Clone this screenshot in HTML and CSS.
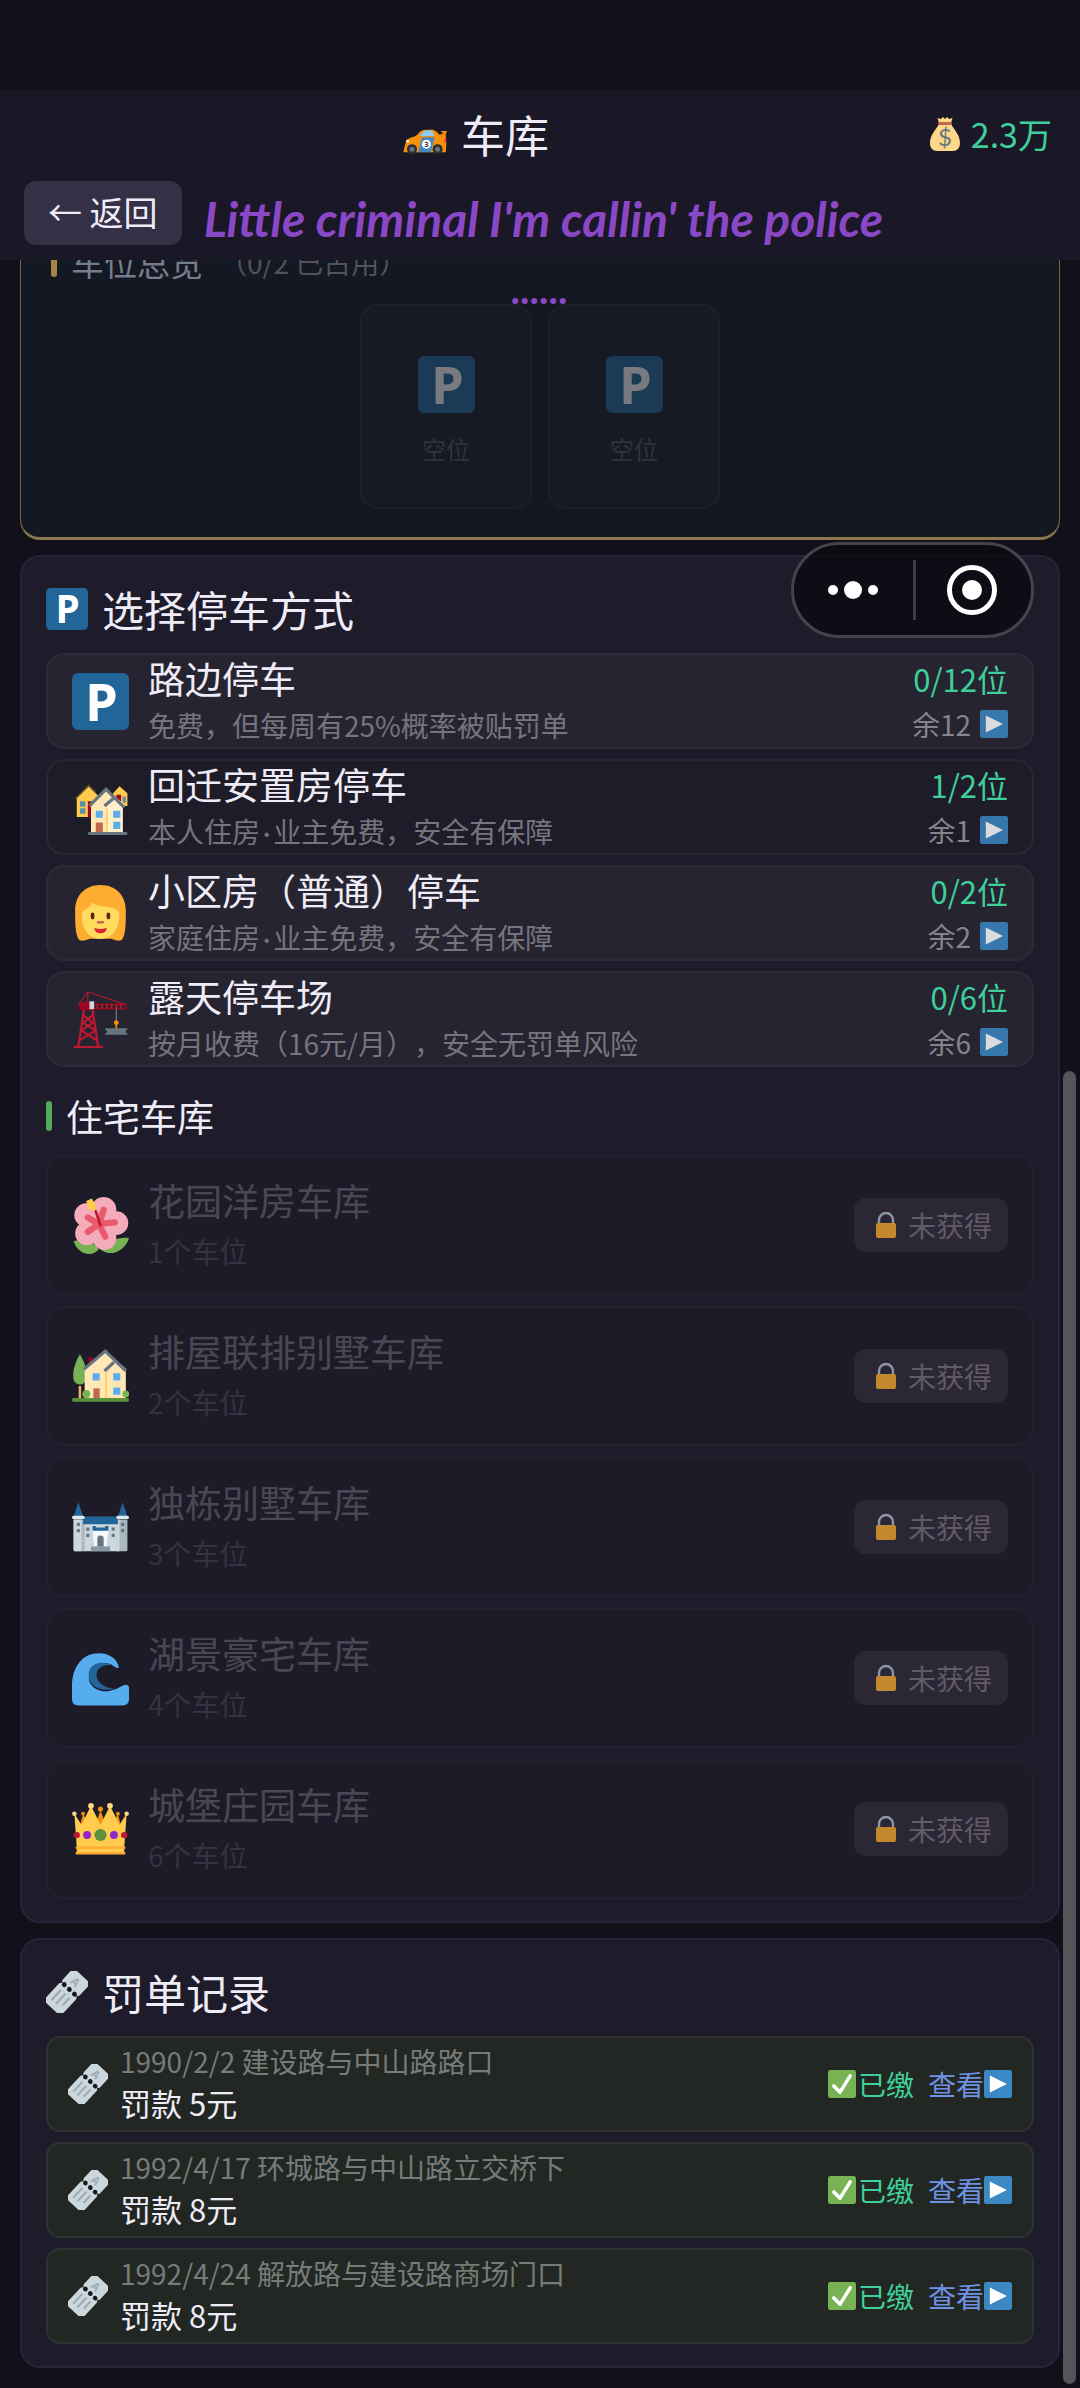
FILE: index.html
```html
<!DOCTYPE html>
<html lang="zh-CN">
<head>
    <meta charset="UTF-8">
    <meta name="viewport" content="width=device-width, initial-scale=1.0">
    <title>车库</title>
    <link rel="stylesheet" href="styles.css">
</head>
<body>
    <!-- 图标库 -->
    <svg class="sprite" aria-hidden="true">
        <symbol id="i-parking" viewBox="0 0 36 36">
            <rect width="36" height="36" rx="4" fill="#226699"/>
            <text x="18.5" y="30" text-anchor="middle" class="glyph-p">P</text>
        </symbol>
        <symbol id="i-car" viewBox="0 0 36 36">
            <path d="M1 33 L3 25 Q4 22 8 21 L11 20 L15 16 Q17 15 20 15 L25 15 Q28 16 30 19 L33 18 L31 16 L36 16 L35 19 L35.500 26 L35 33 Z" fill="#f4900c"/>
            <path d="M15 19 L18 15.500 L24 15.500 L26 20 L14 20 Z" fill="#8ccaf7"/>
            <path d="M16 21 L26 21 L23 33 L13 33 Z" fill="#4289c1"/>
            <circle cx="8" cy="30.500" r="4" fill="#292f33"/><circle cx="8" cy="30.500" r="2" fill="#66757f"/>
            <circle cx="28.500" cy="30.500" r="4" fill="#292f33"/><circle cx="28.500" cy="30.500" r="2" fill="#66757f"/>
            <circle cx="19.500" cy="26.500" r="3.600" fill="#fff"/>
            <text x="19.500" y="28.800" text-anchor="middle" class="glyph-num">3</text>
            <circle cx="4.500" cy="24" r="1.300" fill="#ffe8b6"/>
            <path d="M34 22h1.500v3H34z" fill="#dd2e44"/>
        </symbol>
        <symbol id="i-bag" viewBox="0 0 36 36">
            <path d="M12 7 L10.500 2 L14 3 L16 1 L18 3 L20 1 L22 3 L25.500 2 L24 7 Z" fill="#fdd888"/>
            <path d="M12 8 C8 15 3 19 3 27 C3 31 5 35 10 35 L26 35 C31 35 33 31 33 27 C33 19 28 15 24 8 Z" fill="#fdd888"/>
            <rect x="11" y="6" width="14" height="3" rx="1.500" fill="#bf6952"/>
            <text x="18" y="29.500" text-anchor="middle" class="glyph-dollar">$</text>
        </symbol>
        <symbol id="i-houses" viewBox="0 0 36 36">
            <path d="M3 12 L10.500 4.500 L17 11 V24 H3 Z" fill="#ffcc4d"/>
            <path d="M2 12.500 L10.500 4 L15 8.500" fill="none" stroke="#5c4a2a" stroke-width="1"/>
            <path d="M26 9 L30 4.500 L35 9 V17 H26 Z" fill="#ffcc4d"/>
            <path d="M5 14h3.500v3.500H5zM5 18.500h3.500V22H5zM32 11h2v4h-2z" fill="#5c8fa8"/>
            <path d="M10 14h4v10h-4zM28 10h3v5h-3z" fill="#a0041e"/>
            <path d="M12 17 L21.500 7 L32 15 V34 H12 Z" fill="#ffe8b6"/>
            <path d="M22 17 L27 12 L32 17 V34 H22 Z" fill="#fff0cb"/>
            <path d="M11 17 L21.500 6.500 L33 18 M20.500 17 L27 11.500" fill="none" stroke="#66757f" stroke-width="2"/>
            <path d="M22 19v14" stroke="#ffcc4d"/>
            <path d="M15 20h4.500v4.500H15zM26 20h4.500v4.500H26zM26 27h4.500v4.500H26z" fill="#5dadec"/>
            <path d="M15 27.500h4.500V34H15z" fill="#c1694f"/>
            <rect x="10" y="33.500" width="25" height="1.800" rx=".9" fill="#66757f"/>
        </symbol>
        <symbol id="i-woman" viewBox="0 0 36 36">
            <path d="M18 0 C8 0 2 7 2 16 C2 24 2 30 4 34 C5 36 9 35 11 34 L25 34 C27 35 31 36 32 34 C34 30 34 24 34 16 C34 7 28 0 18 0 Z" fill="#ffac33"/>
            <path d="M13 11 C17 15 26 12 29.500 17 C31 26 26 34 18 34 C10 34 5 26 6.500 17 C8 15 11 15 13 11 Z" fill="#ffdc5d"/>
            <ellipse cx="13" cy="19.500" rx="1.200" ry="2.200" fill="#662113"/><ellipse cx="23" cy="19.500" rx="1.200" ry="2.200" fill="#662113"/>
            <path d="M16.500 23.500h3" stroke="#c1694f" stroke-width="1.600" stroke-linecap="round"/>
            <path d="M14 27 Q18 28.500 22 27 Q21.500 30.500 18 30.500 Q14.500 30.500 14 27 Z" fill="#df1f32"/>
        </symbol>
        <symbol id="i-crane" viewBox="0 0 36 36">
            <path d="M1 35.500h18.500M4 35 L7.500 12 M16.500 35 L13 12 M5 31 L15 25 L7 20 L13.500 15 M15.500 31 L6 25 L13 20 L7 15" fill="none" stroke="#be1931" stroke-width="1.400"/>
            <path d="M4 9 L10 .5 L34 8.500 M10 .5 V8" fill="none" stroke="#be1931" stroke-width=".7"/>
            <path d="M4 11 L6 7 H13 V12 H5 Z" fill="#a0041e"/>
            <rect x="13.500" y="8.500" width="20.500" height="2.600" fill="none" stroke="#a0041e"/>
            <path d="M16 8v3M19 8v3M22 8v3M25 8v3M28 8v3M31 8v3" stroke="#be1931"/>
            <rect x="11" y="6.500" width="3" height="5" fill="#ccd6dd"/>
            <path d="M28 11v9" stroke="#66757f" stroke-width=".8"/>
            <circle cx="28" cy="20" r="1.500" fill="#f4900c"/><path d="M28 20v4" stroke="#f4900c"/>
            <path d="M21 23.500h14v1.200h-1v1.800h1v1.200H21v-1.200h1v-1.800h-1z" fill="#66757f"/>
        </symbol>
        <symbol id="i-flower" viewBox="0 0 36 36">
            <path d="M1 28 C7 26 13 28 17 33 C13 38 4 37 1 28 Z M36 26 C30 25 22 28 18 33 C23 38 33 35 36 26 Z" fill="#77b255"/>
            <circle cx="20" cy="8" r="8" fill="#f4abba"/><circle cx="9" cy="11.500" r="7.500" fill="#f4abba"/>
            <circle cx="28" cy="16.500" r="7.500" fill="#f4abba"/><circle cx="9.500" cy="23" r="7.500" fill="#f4abba"/>
            <circle cx="20.500" cy="26" r="7.500" fill="#f4abba"/><circle cx="18" cy="17" r="9" fill="#f4abba"/>
            <path d="M17 17 L20 8 M17 17 L10 13 M17 17 L27 16 M17 17 L10 22 M17 17 L21 25" stroke="#ea596e" stroke-width="4" stroke-linecap="round"/>
            <path d="M15 9 L18 18" stroke="#be1931" stroke-width="1.600" stroke-linecap="round"/>
            <path d="M9 2.500 L12.500 1 L15.500 6 L14 8.500 L10.500 8 Z" fill="#ffcc4d"/>
        </symbol>
        <symbol id="i-house" viewBox="0 0 36 36">
            <path d="M5 4 C8 9 10 15 9 20 C8 24 2 24 1 20 C0 15 2 9 5 4 Z" fill="#77b255"/>
            <path d="M5 24v8" stroke="#f4b06a" stroke-width="1.600"/>
            <path d="M10.500 6h2.500v5h-2.500z" fill="#a0041e"/>
            <path d="M8 14 L21 2 L34 13 V32 H8 Z" fill="#ffe8b6"/>
            <path d="M7.500 13.500 L21 2 L34 14.500 M20.500 14.500 L26.500 9" fill="none" stroke="#66757f" stroke-width="2"/>
            <path d="M21.500 15v17" stroke="#ffcc4d"/>
            <path d="M13 16h4.500v4.500H13zM26 16h4.500v4.500H26zM26 25h4.500v4.500H26z" fill="#5dadec"/>
            <path d="M13.500 25.500h4V32h-4z" fill="#c1694f"/>
            <circle cx="9" cy="29" r="2.500" fill="#77b255"/><circle cx="34" cy="29" r="2.200" fill="#77b255"/>
            <rect x="0" y="31.500" width="36" height="2.500" rx="1.200" fill="#5c913b"/>
        </symbol>
        <symbol id="i-castle" viewBox="0 0 36 36">
            <path d="M7 12h22v21H7z" fill="#ccd6dd"/><path d="M1 13h7v20H2q-1 0-1-1zM28 13h7v19q0 1-1 1h-6z" fill="#aab8c2"/>
            <path d="M1 13h5v20H2q-1 0-1-1zM28 13h2v20h-2z" fill="#ccd6dd"/>
            <path d="M1 11 L4 2 L7 11 Z M29 11 L32 2 L35 11 Z M7 11h22v5H7z" fill="#226699"/>
            <rect x="0" y="10.500" width="8" height="2.200" rx="1" fill="#e1e8ed"/><rect x="28" y="10.500" width="8" height="2.200" rx="1" fill="#e1e8ed"/>
            <path d="M13 19h10l-1 11h-8z" fill="#f5f8fa"/><path d="M13 17h2v1h6v-1h2v3H13z" fill="#226699"/>
            <path d="M3 15h2v2H3zM3 19h2v2H3zM31 15h2v2h-2zM31 19h2v2h-2zM9 18h2v2H9zM9 22h2v2H9zM25 18h2v2h-2zM25 22h2v2h-2z" fill="#66757f"/>
            <path d="M12 30h12v3H12z" fill="#8899a6"/><path d="M16 30v-5a2 2 0 0 1 4 0v5z" fill="#66757f"/>
        </symbol>
        <symbol id="i-wave" viewBox="0 0 36 36">
            <path d="M0 31 V23 C0 10 7 2 17 2 C24 2 29 6 29.500 11 C29 12 27 11 26 10 C21 6 13 9 11 15 C9 22 16 27 23 26 C29 25 32 22 34 22 C35.500 22 36 23 36 24 V31 Q36 35 32 35 H4 Q0 35 0 31 Z" fill="#55acee"/>
            <path d="M25 9.500 C18 6 11 9 10.500 15 C10 22 17 27 27 24.500 C20 24 15 20 15.500 15 C16 11 20 9 25 9.500 Z" fill="#226699"/>
        </symbol>
        <symbol id="i-crown" viewBox="0 0 36 36">
            <path d="M5 16 L7 8 L10 14 L15 14 L18 6 L21 14 L26 14 L29 8 L31 16 Z" fill="#f4900c"/>
            <circle cx="7" cy="8" r="1.200" fill="#f4900c"/><circle cx="18" cy="5" r="1.600" fill="#f4900c"/><circle cx="29" cy="8" r="1.200" fill="#f4900c"/>
            <path d="M1.500 8 L6 15 L12 3 L18 15 L24 3 L30 15 L34.500 8 L33 29 V33 H3 V29 Z" fill="#ffcc4d"/>
            <circle cx="1.500" cy="8" r="1.400" fill="#ffd983"/><circle cx="12" cy="3" r="1.800" fill="#ffd983"/>
            <circle cx="24" cy="3" r="1.800" fill="#ffd983"/><circle cx="34.500" cy="8" r="1.400" fill="#ffd983"/>
            <path d="M3 29.500h30M3 33h30" stroke="#ffac33" stroke-width="1.600" stroke-linecap="round"/>
            <circle cx="18" cy="21.500" r="3.800" fill="#5c913b"/>
            <circle cx="9.500" cy="21.500" r="2.500" fill="#9225cc"/><circle cx="26.500" cy="21.500" r="2.500" fill="#9225cc"/>
            <circle cx="3" cy="21.500" r="2" fill="#be1931"/><circle cx="33" cy="21.500" r="2" fill="#be1931"/>
        </symbol>
        <symbol id="i-lock" viewBox="0 0 28 28">
            <path d="M7 14 V9 a7 7 0 0 1 14 0 V14" fill="none" stroke="#8c97a3" stroke-width="2.400"/>
            <rect x="4" y="12" width="20" height="15" rx="2" fill="#c4882f"/>
        </symbol>
        <symbol id="i-ticket" viewBox="0 0 36 36">
            <g transform="rotate(-47 18 18)">
                <rect x="-1" y="8" width="22" height="20" rx="3" fill="#ccd6dd"/>
                <rect x="21" y="8" width="16" height="20" rx="3" fill="#ccd6dd"/>
                <circle cx="21" cy="12" r="2.100" fill="#17181f"/><circle cx="21" cy="18" r="2.100" fill="#17181f"/><circle cx="21" cy="24" r="2.100" fill="#17181f"/>
                <path d="M4 13h12M4 18h12M7 23h9" stroke="#9aaab4" stroke-width="1.800"/>
            </g>
            <text x="25" y="13" text-anchor="middle" transform="rotate(43 25 9.500)" class="glyph-a">A</text>
        </symbol>
        <symbol id="i-play" viewBox="0 0 36 36">
            <rect width="36" height="36" rx="3" fill="#3b88c3"/>
            <path d="M7.500 7 L29.500 18 L7.500 29 Z" fill="#fff"/>
        </symbol>
        <symbol id="i-check" viewBox="0 0 36 36">
            <rect width="36" height="36" rx="3" fill="#77b255"/>
            <path d="M7.500 20.500 L15.500 28.500 L28.500 7.500" fill="none" stroke="#fff" stroke-width="4.500" stroke-linecap="round" stroke-linejoin="round"/>
        </symbol>
    </svg>

    <header class="header">
        <div class="title-bar">
            <h1 class="title"><svg class="icon-car"><use href="#i-car"/></svg>车库</h1>
            <div class="money"><svg class="icon-bag"><use href="#i-bag"/></svg>2.3万</div>
        </div>
        <div class="nav-bar">
            <button class="btn-back" type="button">← 返回</button>
            <p class="lyric">Little criminal I'm callin' the police</p>
        </div>
    </header>

    <main class="main">
        <section class="overview">
            <h2 class="overview-title">车位总览 <span class="overview-count">（0/2 已占用）</span></h2>
            <p class="lyric lyric-next">......</p>
            <div class="slots">
                <div class="slot"><svg class="icon-lg"><use href="#i-parking"/></svg><span>空位</span></div>
                <div class="slot"><svg class="icon-lg"><use href="#i-parking"/></svg><span>空位</span></div>
            </div>
        </section>

        <section class="card">
            <h2 class="card-title"><svg class="icon-md"><use href="#i-parking"/></svg>选择停车方式</h2>
            <div class="list">
                <button class="row" type="button">
                    <svg class="icon-lg"><use href="#i-parking"/></svg>
                    <span class="info"><span class="name">路边停车</span><span class="desc">免费，但每周有25%概率被贴罚单</span></span>
                    <span class="count"><span class="used">0/12位</span><span class="left">余12 <svg class="icon-sm"><use href="#i-play"/></svg></span></span>
                </button>
                <button class="row row-owned" type="button">
                    <svg class="icon-lg"><use href="#i-houses"/></svg>
                    <span class="info"><span class="name">回迁安置房停车</span><span class="desc">本人住房<span class="dot">·</span>业主免费，安全有保障</span></span>
                    <span class="count"><span class="used">1/2位</span><span class="left">余1 <svg class="icon-sm"><use href="#i-play"/></svg></span></span>
                </button>
                <button class="row" type="button">
                    <svg class="icon-lg"><use href="#i-woman"/></svg>
                    <span class="info"><span class="name">小区房（普通）停车</span><span class="desc">家庭住房<span class="dot">·</span>业主免费，安全有保障</span></span>
                    <span class="count"><span class="used">0/2位</span><span class="left">余2 <svg class="icon-sm"><use href="#i-play"/></svg></span></span>
                </button>
                <button class="row" type="button">
                    <svg class="icon-lg"><use href="#i-crane"/></svg>
                    <span class="info"><span class="name">露天停车场</span><span class="desc">按月收费（16元/月），安全无罚单风险</span></span>
                    <span class="count"><span class="used">0/6位</span><span class="left">余6 <svg class="icon-sm"><use href="#i-play"/></svg></span></span>
                </button>
            </div>

            <h3 class="sub-title">住宅车库</h3>
            <div class="list list-locked">
                <div class="row row-locked">
                    <svg class="icon-lg"><use href="#i-flower"/></svg>
                    <div class="info"><span class="name">花园洋房车库</span><span class="desc">1个车位</span></div>
                    <span class="badge"><svg class="icon-sm"><use href="#i-lock"/></svg>未获得</span>
                </div>
                <div class="row row-locked">
                    <svg class="icon-lg"><use href="#i-house"/></svg>
                    <div class="info"><span class="name">排屋联排别墅车库</span><span class="desc">2个车位</span></div>
                    <span class="badge"><svg class="icon-sm"><use href="#i-lock"/></svg>未获得</span>
                </div>
                <div class="row row-locked">
                    <svg class="icon-lg"><use href="#i-castle"/></svg>
                    <div class="info"><span class="name">独栋别墅车库</span><span class="desc">3个车位</span></div>
                    <span class="badge"><svg class="icon-sm"><use href="#i-lock"/></svg>未获得</span>
                </div>
                <div class="row row-locked">
                    <svg class="icon-lg"><use href="#i-wave"/></svg>
                    <div class="info"><span class="name">湖景豪宅车库</span><span class="desc">4个车位</span></div>
                    <span class="badge"><svg class="icon-sm"><use href="#i-lock"/></svg>未获得</span>
                </div>
                <div class="row row-locked">
                    <svg class="icon-lg"><use href="#i-crown"/></svg>
                    <div class="info"><span class="name">城堡庄园车库</span><span class="desc">6个车位</span></div>
                    <span class="badge"><svg class="icon-sm"><use href="#i-lock"/></svg>未获得</span>
                </div>
            </div>
        </section>

        <section class="card">
            <h2 class="card-title"><svg class="icon-md"><use href="#i-ticket"/></svg>罚单记录</h2>
            <div class="list">
                <div class="ticket">
                    <svg class="icon-ticket"><use href="#i-ticket"/></svg>
                    <div class="info"><span class="place">1990/2/2 建设路与中山路路口</span><span class="fine">罚款 5元</span></div>
                    <span class="paid"><svg class="icon-sm"><use href="#i-check"/></svg>已缴</span>
                    <a class="view" href="#">查看<svg class="icon-sm"><use href="#i-play"/></svg></a>
                </div>
                <div class="ticket">
                    <svg class="icon-ticket"><use href="#i-ticket"/></svg>
                    <div class="info"><span class="place">1992/4/17 环城路与中山路立交桥下</span><span class="fine">罚款 8元</span></div>
                    <span class="paid"><svg class="icon-sm"><use href="#i-check"/></svg>已缴</span>
                    <a class="view" href="#">查看<svg class="icon-sm"><use href="#i-play"/></svg></a>
                </div>
                <div class="ticket">
                    <svg class="icon-ticket"><use href="#i-ticket"/></svg>
                    <div class="info"><span class="place">1992/4/24 解放路与建设路商场门口</span><span class="fine">罚款 8元</span></div>
                    <span class="paid"><svg class="icon-sm"><use href="#i-check"/></svg>已缴</span>
                    <a class="view" href="#">查看<svg class="icon-sm"><use href="#i-play"/></svg></a>
                </div>
            </div>
        </section>
    </main>

    <!-- 小程序胶囊按钮 -->
    <div class="capsule">
        <button type="button" aria-label="更多">
            <svg width="52" height="52" viewBox="0 0 52 52"><circle cx="6" cy="26" r="5" fill="#fff"/><circle cx="26" cy="26" r="9" fill="#fff"/><circle cx="46" cy="26" r="5" fill="#fff"/></svg>
        </button>
        <button type="button" aria-label="关闭">
            <svg width="52" height="52" viewBox="0 0 52 52"><circle cx="26" cy="26" r="22.500" fill="none" stroke="#fff" stroke-width="5"/><circle cx="26" cy="26" r="10" fill="#fff"/></svg>
        </button>
    </div>
    <div class="scrollbar"></div>
</body>
</html>
```
FILE: styles.css
```css
* { box-sizing: border-box; }
body { margin: 0; position: relative; background-color: #11101b; color: #efecf8; font-family: "Noto Sans CJK SC", sans-serif; font-size: 28px; text-spacing-trim: space-all; }
h1, h2, h3, p { margin: 0; font-weight: 400; }
button { font-family: inherit; color: inherit; cursor: pointer; }
.sprite { display: none; }
.glyph-p { font: 700 33px "Open Sans", sans-serif; fill: #fff; }
.glyph-num { font: 700 6px "Open Sans", sans-serif; fill: #292f33; }
.glyph-dollar { font: 400 24px Lato, sans-serif; fill: #67757f; }
.glyph-a { font: 700 10px "Open Sans", sans-serif; fill: #9aaab4; }

.icon-lg { width: 57px; height: 57px; flex-shrink: 0; }
.icon-md { width: 42px; height: 42px; flex-shrink: 0; }
.icon-ticket { width: 40px; height: 40px; flex-shrink: 0; }
.icon-sm { width: 28px; height: 28px; flex-shrink: 0; }
.icon-car { width: 45px; height: 45px; }
.icon-bag { width: 36px; height: 36px; }

.header { position: sticky; top: 0; z-index: 2; padding-top: 90px; background: linear-gradient(#11101b 90px, #1a1726 90px); }
.title-bar { display: flex; align-items: center; height: 91px; padding: 0 28px 4px 24px; }
.title { flex: 1; display: flex; align-items: center; justify-content: center; gap: 14px; font-size: 44px; line-height: 60px; }
.money { display: flex; align-items: center; gap: 8px; color: #3ecf9a; font-size: 34px; line-height: 48px; }
.nav-bar { display: flex; align-items: flex-end; gap: 22px; padding: 0 24px 15px; }
.btn-back { height: 64px; padding: 0 24px 2px; border: none; border-radius: 12px; background-color: #343045; font-size: 34px; line-height: 48px; }
.lyric { color: #8b48c6; font: italic 700 48px/52px Lato, sans-serif; white-space: nowrap; }

.main { padding: 0 20px 20px; }
.overview { position: relative; margin: -59px 0 15px; padding: 38px 24px 28px; border: 1px solid #75663f; border-bottom: 3px solid #8a794b; border-radius: 20px; background-color: #141822; }
.overview-title { display: flex; align-items: center; color: #777d8c; font-size: 33px; line-height: 44px; }
.overview-title::before { content: ""; width: 6px; height: 30px; margin: 0 14px 0 6px; border-radius: 3px; background-color: #a68646; }
.overview-count { margin-left: 16px; color: #50535e; font-size: 28px; }
.lyric-next { position: absolute; top: 61px; left: 0; width: 100%; font-size: 40px; text-align: center; }
.slots { display: flex; justify-content: center; gap: 16px; margin-top: 20px; }
.slot { display: flex; flex-direction: column; align-items: center; width: 172px; height: 205px; padding-top: 50px; border: 2px solid #1d202b; border-radius: 18px; background-color: #171a24; color: #30333d; font-size: 24px; }
.slot svg { opacity: 0.42; }
.slot span { margin-top: 18px; line-height: 36px; }

.card { margin-bottom: 15px; padding: 22px 24px 22px; border: 2px solid #27243a; border-radius: 20px; background-color: #1e1b2b; }
.card:last-child { margin-bottom: 0; }
.card-title { display: flex; align-items: center; gap: 14px; margin-bottom: 14px; font-size: 42px; line-height: 60px; }
.list { display: flex; flex-direction: column; gap: 10px; }
.row { display: flex; align-items: center; gap: 19px; width: 100%; height: 96px; padding: 0 24px; border: 2px solid #2e2b39; border-radius: 18px; background-color: #262430; text-align: left; }
.row-owned { border-color: #2a2735; background-color: #1f1c29; }
.info { flex: 1; display: flex; flex-direction: column; }
.name { font-size: 37px; line-height: 48px; }
.desc { color: #76747f; font-size: 28px; line-height: 46px; }
.dot { padding: 0 3px; font-family: Lato, sans-serif; }
.count { display: flex; flex-direction: column; align-items: flex-end; }
.used { color: #3ecf9a; font-size: 31px; line-height: 46px; }
.left { display: flex; align-items: center; gap: 9px; color: #85838e; font-size: 28px; line-height: 44px; }
.left svg { opacity: 0.84; }

.sub-title { display: flex; align-items: center; margin: 25px 0 15px; font-size: 37px; line-height: 48px; }
.sub-title::before { content: ""; width: 6px; height: 30px; margin-right: 14px; border-radius: 3px; background-color: #52ab5b; }
.list-locked { gap: 11px; }
.row-locked { height: 140px; border-color: #23202f; background-color: #1e1b28; }
.row-locked .name { color: #4a4755; }
.row-locked .desc { margin-top: 4px; color: #353241; }
.badge { display: flex; align-items: center; gap: 8px; height: 54px; padding: 0 16px 0 18px; border-radius: 12px; background-color: #2c2735; color: #605b69; }

.ticket { display: flex; align-items: center; height: 96px; padding: 0 20px; border: 2px solid #2c3331; border-radius: 14px; background-color: #222723; }
.ticket .info { margin: 0 0 2px 12px; }
.place { color: #777b79; line-height: 40px; }
.fine { font-size: 31px; line-height: 44px; }
.paid, .view { display: flex; align-items: center; line-height: 40px; }
.paid { gap: 2px; color: #3ecf9a; }
.view { margin-left: 14px; color: #6f92e3; text-decoration: none; }

.capsule { position: fixed; top: 542px; right: 46px; z-index: 3; display: flex; width: 243px; height: 96px; border: 3px solid #45434c; border-radius: 48px; background-color: rgba(10, 9, 16, 0.75); }
.capsule button { position: relative; flex: 1; display: flex; align-items: center; justify-content: center; padding: 0; border: none; background: none; }
.capsule button + button::before { content: ""; position: absolute; left: 0; width: 3px; height: 60px; background-color: #3d3b45; }
.scrollbar { position: fixed; right: 4px; bottom: 4px; z-index: 1; width: 13px; height: 1313px; border-radius: 7px; background-color: #555459; }
```
